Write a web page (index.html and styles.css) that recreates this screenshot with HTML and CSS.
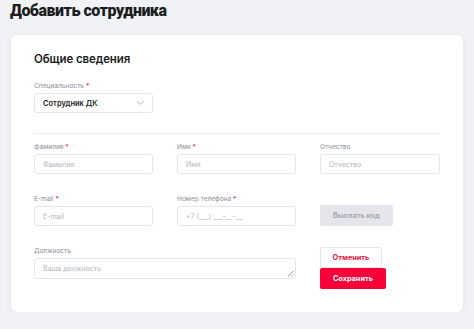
FILE: index.html
```html
<!DOCTYPE html>
<html>
<head>
  <meta charset="utf-8">
  <title>Добавить сотрудника</title>
  <link rel="stylesheet" href="styles.css">
</head>
<body>
  <h1 class="page-title">Добавить сотрудника</h1>

  <div class="card">
    <h2 class="section-title">Общие сведения</h2>

    <div class="field">
      <label class="field-label">Специальность <span class="req">*</span></label>
      <div class="select">
        <span class="select-value">Сотрудник ДК</span>
        <svg class="chevron" width="9" height="6" viewBox="0 0 9 6">
          <polyline points="1,1 4.5,4.5 8,1" fill="none" stroke="#b9bcc4" stroke-width="0.9"/>
        </svg>
      </div>
    </div>

    <div class="divider"></div>

    <div class="form-grid">
      <div class="field">
        <label class="field-label">Фамилия <span class="req">*</span></label>
        <input class="input" placeholder="Фамилия">
      </div>
      <div class="field">
        <label class="field-label">Имя <span class="req">*</span></label>
        <input class="input" placeholder="Имя">
      </div>
      <div class="field">
        <label class="field-label">Отчество</label>
        <input class="input" placeholder="Отчество">
      </div>

      <div class="field">
        <label class="field-label">E-mail <span class="req">*</span></label>
        <input class="input" placeholder="E-mail">
      </div>
      <div class="field">
        <label class="field-label">Номер телефона <span class="req">*</span></label>
        <input class="input" placeholder="+7 (___) ___-__-__">
      </div>
      <div class="field field-end">
        <button class="btn btn-code" disabled>Выслать код</button>
      </div>

      <div class="field field-wide">
        <label class="field-label">Должность</label>
        <textarea class="input textarea" placeholder="Ваша должность"></textarea>
      </div>
      <div class="actions">
        <button class="btn btn-cancel">Отменить</button>
        <button class="btn btn-save">Сохранить</button>
      </div>
    </div>
  </div>
</body>
</html>
```

FILE: styles.css
```css
body {
  font-family: Inter, 'Noto Sans', sans-serif;
  margin: 0;
  padding: 0 0 0 10px;
  background-color: #f1f2f6;
  color: #1c1d21;
}
.page-title {
  margin: 0;
  font-family: Roboto, Inter, sans-serif;
  font-size: 16px;
  line-height: 22px;
  font-weight: 900;
  letter-spacing: -0.5px;
}
.card {
  width: 406px;
  margin: 13px 0 0 1px;
  padding: 16px 23px 23px 23px;
  background: white;
  border-radius: 6px;
  box-shadow: 0 1px 6px rgba(30, 35, 60, 0.07);
}
.section-title {
  margin: 0 0 14px 0;
  font-size: 11.5px;
  line-height: 16px;
  font-weight: 600;
  letter-spacing: -0.1px;
}
.field {
  display: flex;
  flex-direction: column;
}
.field-end {
  justify-content: flex-end;
}
.field-label {
  font-size: 6.6px;
  line-height: 10px;
  color: #8b8f98;
  margin-bottom: 2px;
}
.req {
  color: #e8173f;
}
.select {
  width: 119px;
  height: 20px;
  box-sizing: border-box;
  border: 1px solid #e4e6eb;
  border-radius: 3px;
  display: flex;
  align-items: center;
  justify-content: space-between;
  padding: 0 7px 0 8px;
}
.select-value {
  font-size: 7.5px;
  font-weight: 600;
  color: #222;
}
.divider {
  height: 1px;
  background-color: #e9eaef;
  margin: 20px 0 8px 0;
}
.form-grid {
  display: grid;
  grid-template-columns: 119px 119px 120px;
  column-gap: 24px;
  row-gap: 20px;
}
.field-wide {
  grid-column: span 2;
}
.input {
  height: 20px;
  box-sizing: border-box;
  border: 1px solid #e4e6eb;
  border-radius: 3px;
  padding: 0 8px;
  font-family: inherit;
  font-size: 7px;
  color: #333;
  outline: none;
}
.input::placeholder {
  color: #b3b6be;
}
.textarea {
  height: 21px;
  padding: 5px 8px;
  resize: both;
}
.textarea::-webkit-resizer {
  background:
    linear-gradient(135deg, transparent 40%, #c4c7ce 40%, #c4c7ce 52%, transparent 52%, transparent 70%, #c4c7ce 70%, #c4c7ce 82%, transparent 82%)
    no-repeat right 1px bottom 1px / 6px 6px;
}
.actions {
  display: flex;
  flex-direction: column;
  align-items: flex-start;
  padding-top: 1px;
}
.btn {
  font-family: inherit;
  font-size: 7.3px;
  font-weight: 700;
  border-radius: 2px;
  height: 21px;
  padding: 0;
  cursor: pointer;
}
.btn-code {
  width: 73px;
  border: none;
  background-color: #e4e6ec;
  color: #a4a8b1;
}
.btn-cancel {
  width: 62px;
  border: 1px solid #e6e7eb;
  background: white;
  color: #e8173f;
}
.btn-save {
  width: 66px;
  border: none;
  background-color: #f7003a;
  color: white;
}
```
